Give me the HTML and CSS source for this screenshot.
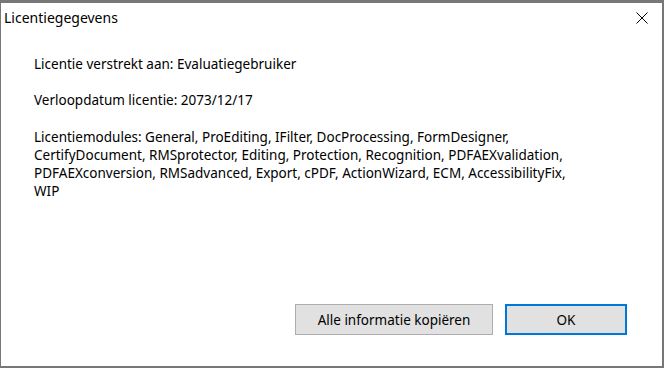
FILE: index.html
```html
<!DOCTYPE html>
<html lang="nl">
<head>
<meta charset="utf-8">
<title>Licentiegegevens</title>
<link rel="stylesheet" href="styles.css">
</head>
<body>
<div class="window">
  <div class="titlebar">
    <span class="title">Licentiegegevens</span>
    <span class="close" aria-label="Sluiten">
      <svg width="12" height="12" viewBox="0 0 12 12"><path d="M0.5 0.5L11.5 11.5M11.5 0.5L0.5 11.5" stroke="#000" stroke-width="1" fill="none"/></svg>
    </span>
  </div>
  <div class="content">
    <p class="line">Licentie verstrekt aan: Evaluatiegebruiker</p>
    <p class="line">Verloopdatum licentie: 2073/12/17</p>
    <p class="line modules">Licentiemodules: General, ProEditing, IFilter, DocProcessing, FormDesigner, CertifyDocument, RMSprotector, Editing, Protection, Recognition, PDFAEXvalidation, PDFAEXconversion, RMSadvanced, Export, cPDF, ActionWizard, ECM, AccessibilityFix, WIP</p>
  </div>
  <div class="footer">
    <button class="btn btn-copy">Alle informatie kopiëren</button>
    <button class="btn btn-ok">OK</button>
  </div>
</div>
</body>
</html>
```
FILE: styles.css
```css
* { box-sizing: border-box; }
html, body { margin: 0; padding: 0; background: #fff; }
body { font-family: "Noto Sans", "Liberation Sans", sans-serif; font-size: 13.5px; color: #000; }
.window {
  width: 664px;
  height: 368px;
  display: flex;
  flex-direction: column;
  background: #fff;
  border-style: solid;
  border-color: #777;
  border-width: 3px 2px 2px 1px;
}
.titlebar {
  height: 30px;
  display: flex;
  align-items: center;
  justify-content: space-between;
  padding-left: 3px;
  padding-right: 14px;
}
.title { font-size: 14px; line-height: 18px; }
.close { display: flex; width: 12px; height: 12px; }
.content {
  flex: 1;
  padding: 22px 0 0 33px;
}
.line {
  margin: 0 0 18px 0;
  line-height: 18.3px;
}
.modules { max-width: 552px; }
.footer {
  display: flex;
  justify-content: flex-end;
  gap: 12px;
  padding: 0 35px 31px 0;
}
.btn {
  height: 31px;
  font-family: inherit;
  font-size: 13.5px;
  color: #000;
  background: #e1e1e1;
  border: 1px solid #adadad;
  padding: 0;
  margin: 0;
}
.btn-copy { width: 198px; }
.btn-ok { width: 122px; border: 2px solid #0078d7; }
```
